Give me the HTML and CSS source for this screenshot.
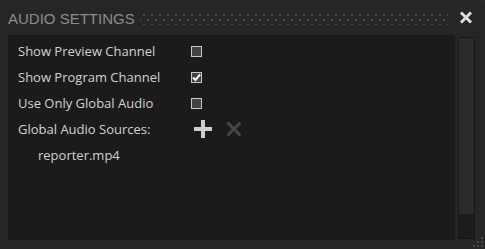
FILE: index.html
```html
<!DOCTYPE html>
<html lang="en">
<head>
  <meta charset="UTF-8">
  <title>Audio Settings</title>
  <link rel="stylesheet" href="styles.css">
</head>
<body>
  <div class="window">
    <div class="titlebar">
      <span class="title">AUDIO SETTINGS</span>
      <span class="grip"></span>
      <span class="close">
        <svg width="14" height="13" viewBox="0 0 14 13"><path d="M2 1.5 L12 11.5 M12 1.5 L2 11.5" stroke="#dcdcdc" stroke-width="3"/></svg>
      </span>
    </div>
    <div class="body">
      <div class="panel">
        <div class="row"><span class="label">Show Preview Channel</span><span class="check"></span></div>
        <div class="row"><span class="label">Show Program Channel</span><span class="check on">
          <svg width="9" height="9" viewBox="0 0 9 9"><path d="M1 4.5 L3.5 7 L8 1.5" stroke="#fff" stroke-width="2" fill="none"/></svg>
        </span></div>
        <div class="row"><span class="label">Use Only Global Audio</span><span class="check"></span></div>
        <div class="row">
          <span class="label">Global Audio Sources:</span>
          <span class="icons">
            <svg width="18" height="18" viewBox="0 0 18 18"><path d="M9 0 V18 M0 9 H18" stroke="#cfcfcf" stroke-width="4"/></svg>
            <svg class="del" width="16" height="16" viewBox="0 0 16 16"><path d="M1.5 1.5 L14.5 14.5 M14.5 1.5 L1.5 14.5" stroke="#464646" stroke-width="3"/></svg>
          </span>
        </div>
        <div class="file">reporter.mp4</div>
      </div>
      <div class="scroll"><div class="thumb"></div></div>
    </div>
    <div class="foot">
      <svg class="resize" width="12" height="12" viewBox="0 0 12 12">
        <rect x="9" y="0" width="2" height="2" fill="#4a4a4a"/>
        <rect x="5" y="4" width="2" height="2" fill="#4a4a4a"/>
        <rect x="9" y="4" width="2" height="2" fill="#4a4a4a"/>
        <rect x="1" y="8" width="2" height="2" fill="#4a4a4a"/>
        <rect x="5" y="8" width="2" height="2" fill="#4a4a4a"/>
        <rect x="9" y="8" width="2" height="2" fill="#4a4a4a"/>
      </svg>
    </div>
  </div>
</body>
</html>
```

FILE: styles.css
```css
body {
  margin: 0;
  background: #2a2a2a;
  font-family: "Open Sans", "Liberation Sans", sans-serif;
}

.window {
  width: 485px;
  height: 249px;
  background: #262626;
  border-radius: 0 6px 0 0;
  display: flex;
  flex-direction: column;
}

.titlebar {
  height: 35px;
  display: flex;
  align-items: center;
  padding: 0 12px 0 8px;
  box-sizing: border-box;
}

.title {
  font-family: "Liberation Sans", Arial, sans-serif;
  font-size: 15px;
  color: #8c8c8c;
  margin-top: 1px;
}

.grip {
  flex: 1;
  height: 14px;
  margin: 0 11px 0 5px;
  background-image:
    radial-gradient(circle, #4a4a4a 1px, transparent 1.3px),
    radial-gradient(circle, #4a4a4a 1px, transparent 1.3px);
  background-size: 8px 10px;
  background-position: 0 -1px, 4px 4px;
}

.close {
  display: flex;
}

.body {
  flex: 1;
  display: flex;
  padding: 0 0 0 8px;
}

.panel {
  flex: 1;
  background: #1b1b1b;
  padding: 3px 10px;
}

.row {
  height: 26px;
  display: flex;
  align-items: center;
}

.label {
  width: 173px;
  font-size: 13px;
  color: #d2d2d2;
}

.check {
  width: 9px;
  height: 9px;
  border: 1px solid #c8c8c8;
  background: #424242;
  display: flex;
  align-items: center;
  justify-content: center;
}

.icons {
  display: flex;
  align-items: center;
  gap: 14px;
  margin-left: 3px;
}

.file {
  padding-left: 20px;
  height: 26px;
  line-height: 26px;
  font-size: 13px;
  color: #cfcfcf;
}

.scroll {
  width: 15px;
  margin: 2px 10px 1px 3px;
  background: #2b2b2b;
  border: 1px solid #161616;
  display: flex;
  flex-direction: column;
  justify-content: flex-end;
}

.thumb {
  height: 24px;
  background: #1c1c1c;
}

.foot {
  height: 9px;
  position: relative;
}

.resize {
  position: absolute;
  right: 1px;
  bottom: 0;
}
```
